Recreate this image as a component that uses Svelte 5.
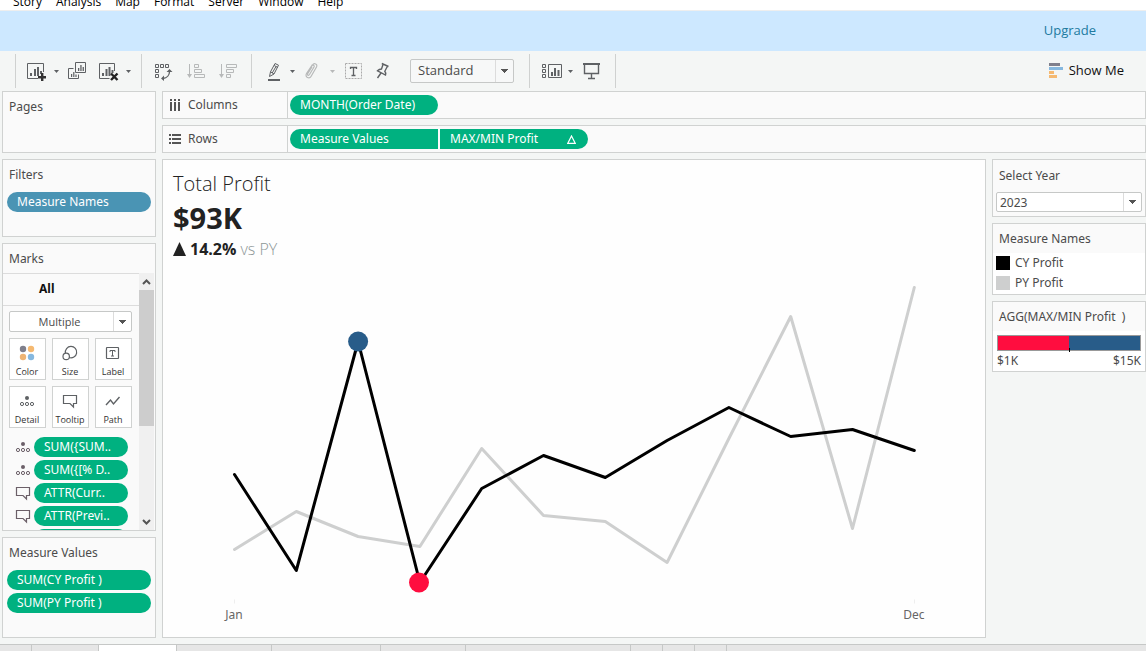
<script>
  const menus = ['Story', 'Analysis', 'Map', 'Format', 'Server', 'Window', 'Help'];
  const markCards = ['Color', 'Size', 'Label', 'Detail', 'Tooltip', 'Path'];
  const markPills = [
    { kind: 'Detail', text: 'SUM({SUM..' },
    { kind: 'Detail', text: 'SUM({[% D..' },
    { kind: 'Tooltip', text: 'ATTR(Curr..' },
    { kind: 'Tooltip', text: 'ATTR(Previ..' }
  ];
  const tabs = [32, 67, 78, 95, 109, 85, 165, 32, 32, 32];

  const cy = [205, 301, 72, 313, 219, 186, 208, 171, 138, 167, 160, 181];
  const py = [280, 242, 267, 277, 179, 246, 252, 293, 169, 47, 259, 18];
  const px = (i) => 71.5 + i * 61.8;
  const line = (ys) => ys.map((y, i) => `${px(i)},${y}`).join(' ');
</script>

{#snippet caret(label, dim = false)}
  <button class="caret" class:dim aria-label={label}>
    <svg width="5" height="3" viewBox="0 0 5 3"><path d="M0 0H5L2.5 3Z" fill="currentColor" /></svg>
  </button>
{/snippet}

{#snippet markIcon(kind)}
  <svg width="18" height="18" viewBox="0 0 18 18" fill="none" stroke="currentColor" stroke-width="1.2">
    {#if kind === 'Color'}
      <g stroke="none">
        <circle cx="5" cy="5" r="3.2" fill="#7f7f8c" /><circle cx="13" cy="5" r="3.2" fill="#f5b971" />
        <circle cx="5" cy="13" r="3.2" fill="#efb473" /><circle cx="13" cy="13" r="3.2" fill="#86b8df" />
      </g>
    {:else if kind === 'Size'}
      <path d="M4.4 9.2A5.7 5.7 0 1 1 8.1 13.5" /><circle cx="5.2" cy="12.4" r="3.2" />
    {:else if kind === 'Label'}
      <rect x="2.5" y="3.5" width="12" height="11" rx="0.5" />
      <path d="M6 8V6.5H11V8M8.5 6.5V12M7 12H10" stroke-width="1" />
    {:else if kind === 'Detail'}
      <circle cx="9" cy="6" r="2" fill="currentColor" stroke="none" />
      <circle cx="4" cy="12" r="1.6" stroke-width="1" /><circle cx="9" cy="12" r="1.6" stroke-width="1" /><circle cx="14" cy="12" r="1.6" stroke-width="1" />
    {:else if kind === 'Tooltip'}
      <path d="M2.5 3.5H15.5V11.5H12.5V15L9 11.5H2.5Z" />
    {:else}
      <path d="M2 13L6.5 8L9.5 12L15.5 5" stroke-width="1.4" />
    {/if}
  </svg>
{/snippet}

<div class="app">
  <nav class="menu">
    {#each menus as m}<button>{m}</button>{/each}
  </nav>

  <div class="banner"><a href="#upgrade">Upgrade</a></div>

  <div class="toolbar">
    <div class="group stub"></div>
    <div class="group g1">
      <div class="tool">
        <button class="icon" aria-label="New worksheet">
          <svg viewBox="0 0 20 20"><path d="M16.5 11V2.5H.5V17.5H11" class="s" /><path d="M3 12h2v3H3zM7 8h2v7H7zM10 6h2v9h-2zM13 10h2v3h-2z" /><path d="M14 12h2.4v3H19v2.4h-2.6V20H14v-2.6h-3V15h3z" fill="#333" /></svg>
        </button>
        {@render caret('New worksheet options')}
      </div>
      <button class="icon" aria-label="Duplicate">
        <svg viewBox="0 0 20 20"><path d="M5.5 1.5h10v10h-10zM3.5 7.5h-5v10h10v-4" class="s" /><path d="M8 7h1.3v3H8zM10.3 4h1.3v6h-1.3zM12.6 6h1.3v4h-1.3zM1 13h1.2v3H1zM3.2 11h1.2v5H3.2zM5.4 13.5h1.2V16H5.4z" /></svg>
      </button>
      <div class="tool">
        <button class="icon" aria-label="Clear sheet">
          <svg viewBox="0 0 20 20"><path d="M15.5 10V2.5H.5V17.5H10.5" class="s" /><path d="M3 12h2v3H3zM6.5 8h2v7h-2zM9.5 6h2v9h-2zM12.5 9h2v3h-2z" /><path d="M12 12.5l6.5 6.5M18.5 12.5L12 19" fill="none" stroke="#222" stroke-width="2.4" /></svg>
        </button>
        {@render caret('Clear sheet options')}
      </div>
    </div>
    <div class="group g2">
      <button class="icon" aria-label="Swap rows and columns">
        <svg viewBox="0 0 20 20"><path d="M2.5 3.5h3v3h-3zM7.5 3.5h3v3h-3zM12.5 3.5h3v3h-3zM2.5 8.5h3v3h-3zM2.5 13.5h3v3h-3z" class="s" /><path d="M16.5 10.500C16.500 14 14 17 10 17.500" class="s" stroke-width="1.3" /><path d="M13.500 11L16.500 8L19.500 11ZM11 14.500V20L8 17.500Z" /></svg>
      </button>
      <button class="icon dim" aria-label="Sort ascending">
        <svg viewBox="0 0 20 20"><path d="M4.5 3V15M9.5 3.5h4v3h-4zM9.5 8.5h7v3h-7zM9.5 13.5h10v3h-10z" class="s" /><path d="M2 13h5L4.5 17z" /></svg>
      </button>
      <button class="icon dim" aria-label="Sort descending">
        <svg viewBox="0 0 20 20"><path d="M4.5 3V15M9.5 3.5h10v3h-10zM9.5 8.5h7v3h-7zM9.5 13.5h4v3h-4z" class="s" /><path d="M2 13h5L4.5 17z" /></svg>
      </button>
    </div>
    <div class="group g3">
      <div class="tool">
        <button class="icon" aria-label="Highlight">
          <svg viewBox="0 0 20 20"><path d="M12 2.5L15.5 4.2L11 13L6.5 15.5L7.5 10.8ZM11.2 4.5L14.8 6.5M7.5 10.8L11 13M13 5.5L9.2 12" class="s" /><path d="M5 18h12v2H5z" /></svg>
        </button>
        {@render caret('Highlight options')}
      </div>
      <div class="tool">
        <button class="icon dim" aria-label="Group members">
          <svg viewBox="0 0 20 20"><path d="M5 11L9.5 4C11 1.5 15 3 13.5 6L8 15.5C6.5 18 1.5 16.5 3.5 12.5L8.5 5C9.5 3 12 4.5 11 6L6.5 13.5C5.5 15 3.8 14 4.8 12.5L9 6" class="s" stroke-width="1.2" /></svg>
        </button>
        {@render caret('Group options', true)}
      </div>
      <button class="icon" aria-label="Show mark labels">
        <svg viewBox="0 0 20 20"><rect x="2.5" y="2.5" width="16" height="15" class="s dash" /><path d="M7.5 8V6.5H13.5V8M10.5 6.5V14.5M8.5 14.5H12.5" class="s" stroke-width="1.3" /></svg>
      </button>
      <button class="icon" aria-label="Fix axes">
        <svg viewBox="0 0 20 20"><path d="M12.8 2.5L19.5 5.5M14 3.5L12.5 8C11 8 9.500 8.700 8.500 9.800L16.500 14C17 12.500 16.700 11.300 15.800 10.300L18.300 5.500M12 12L8.500 17" class="s" stroke-width="1.4" /></svg>
      </button>
      <select class="fit" aria-label="Fit"><option>Standard</option><option>Fit Width</option></select>
    </div>
    <div class="group g4">
      <div class="tool">
        <button class="icon" aria-label="Show or hide cards">
          <svg viewBox="0 0 20 20"><path d="M1.5 3.5h3v3h-3zM1.5 8.5h3v3h-3zM1.5 13.5h3v3h-3zM7.5 3.5h13v13h-13z" class="s" /><path d="M10 11h2v4h-2zM13 7h2v8h-2zM16.5 9h2v6h-2z" /></svg>
        </button>
        {@render caret('Card options')}
      </div>
      <button class="icon" aria-label="Presentation mode">
        <svg viewBox="0 0 20 20"><path d="M1 2h17v2H1z" /><path d="M2.5 4V12.5H16.5V4M9.5 12.5V17.5M6 17.5H13" class="s" stroke-width="1.4" /></svg>
      </button>
    </div>
    <button class="showme">
      <svg width="14" height="15" viewBox="0 0 14 15"><path fill="#7f7f8c" d="M0 0h11v3H0z" /><path fill="#86b8df" d="M0 4h14v3H0z" /><path fill="#f5b971" d="M0 8h5v3H0zM0 12h8v3H0z" /></svg>
      Show Me
    </button>
  </div>

  <main class="work">
    <aside class="left">
      <section class="card pages"><h2>Pages</h2></section>
      <section class="card filters">
        <h2>Filters</h2>
        <button class="pill blue">Measure Names</button>
      </section>
      <section class="card marks">
        <h2>Marks</h2>
        <div class="marks-body">
          <div class="marks-content">
            <div class="all">All</div>
            <div class="mark-tools">
              <select class="multiple" aria-label="Mark type"><option>Multiple</option><option>Line</option></select>
              <div class="mark-grid">
                {#each markCards as c}
                  <button>{@render markIcon(c)}<span>{c}</span></button>
                {/each}
              </div>
            </div>
            <ul>
              {#each markPills as p}
                <li>{@render markIcon(p.kind)}<button class="pill">{p.text}</button></li>
              {/each}
              <li class="next"><button class="pill" aria-label="More fields"></button></li>
            </ul>
          </div>
          <div class="scroll">
            <button aria-label="Scroll up"><svg width="9" height="6" viewBox="0 0 9 6"><path d="M1 5L4.5 1.5L8 5" /></svg></button>
            <div class="thumb"></div>
            <button class="down" aria-label="Scroll down"><svg width="9" height="6" viewBox="0 0 9 6"><path d="M1 1L4.5 4.5L8 1" /></svg></button>
          </div>
        </div>
      </section>
      <section class="card values">
        <h2>Measure Values</h2>
        <button class="pill">SUM(CY Profit )</button>
        <button class="pill">SUM(PY Profit )</button>
      </section>
    </aside>

    <div class="center">
      <section class="card shelf">
        <h2>
          <svg width="12" height="12" viewBox="0 0 12 12" fill="#555"><path d="M1 0h2v2H1zM5 0h2v2H5zM9 0h2v2H9zM1 3h2v9H1zM5 3h2v9H5zM9 3h2v9H9z" /></svg>
          Columns
        </h2>
        <div class="drop"><button class="pill field">MONTH(Order Date)</button></div>
      </section>
      <section class="card shelf">
        <h2>
          <svg width="12" height="12" viewBox="0 0 12 12" fill="#555"><path d="M0 1h2v2H0zM0 5h2v2H0zM0 9h2v2H0zM3 1h9v2H3zM3 5h9v2H3zM3 9h9v2H3z" /></svg>
          Rows
        </h2>
        <div class="drop">
          <button class="pill field first">Measure Values</button>
          <button class="pill field last">MAX/MIN Profit
            <svg width="9" height="9" viewBox="0 0 9 9"><path d="M4.5 1L8.2 8.3H.8Z" fill="none" stroke="#fff" stroke-width="1.2" /></svg>
          </button>
        </div>
      </section>

      <div class="lower">
        <section class="card sheet">
          <header>
            <h1>Total Profit</h1>
            <div class="total">$93K</div>
            <div class="delta">
              <svg width="13" height="14" viewBox="0 0 13 14"><path d="M6.5 0L13 14H0Z" fill="#222" /></svg>
              <b>14.2%</b><span>vs PY</span>
            </div>
          </header>
          <svg class="chart" viewBox="0 0 822 367" role="img" aria-label="Monthly profit, January to December">
            <polyline points={line(py)} stroke="#cecfcf" />
            <polyline points={line(cy)} stroke="#000" />
            <circle cx={px(2)} cy="72" r="10" fill="#285c89" />
            <circle cx="256" cy="313" r="10" fill="#ff0d3f" />
            <path d="M71.5 330v4M751.5 330v4" stroke="#eee" />
            <text x="71" y="349">Jan</text>
            <text x="751" y="349">Dec</text>
          </svg>
        </section>

        <aside class="right">
          <section class="card year">
            <h2><label for="year">Select Year</label></h2>
            <select id="year"><option>2023</option><option>2022</option></select>
          </section>
          <section class="card names">
            <h2>Measure Names</h2>
            <ul>
              <li><i class="black"></i>CY Profit</li>
              <li><i></i>PY Profit</li>
            </ul>
          </section>
          <section class="card agg">
            <h2>AGG(MAX/MIN Profit&nbsp; )</h2>
            <div class="ramp"></div>
            <div class="ends"><span>$1K</span><span>$15K</span></div>
          </section>
        </aside>
      </div>
    </div>
  </main>

  <footer class="tabs">
    {#each tabs as w, i}
      <button class:active={i === 2} style="width: {w}px" aria-label="Tab {i + 1}"></button>
    {/each}
  </footer>
</div>

<style>
  :global(body) { background: #f4f6f5; }
  .app, .app :global(*) { box-sizing: border-box; }
  .app {
    display: flex; flex-direction: column; height: 100vh; overflow: hidden;
    font: 12px/20px "Noto Sans", "Open Sans", sans-serif; color: #4b4b4b; background: #f4f6f5;
  }
  button, select { font: inherit; color: inherit; background: none; border: 0; padding: 0; margin: 0; }
  button { display: flex; align-items: center; justify-content: center; }
  h1, h2, ul { margin: 0; padding: 0; list-style: none; font-weight: 400; }
  h2 { font-size: 12px; line-height: 30px; padding-left: 6px; }
  svg { display: block; flex: none; }
  .menu, .banner, .toolbar, header, .mark-grid, .multiple { font-family: "Open Sans", "Noto Sans", sans-serif; }

  .menu { display: flex; align-items: flex-end; gap: 14px; height: 11px; flex: none; padding-left: 13px; background: #fff; border-bottom: 1px solid #eee; overflow: hidden; }
  .menu button { color: #000; line-height: 16px; height: 16px; }
  .banner { flex: none; height: 40px; display: flex; align-items: center; justify-content: flex-end; padding: 0 50px 2px 0; background: #cde8ff; font-size: 13px; }
  .banner a { color: #217aa0; text-decoration: none; }

  .toolbar { flex: none; height: 40px; display: flex; align-items: center; }
  .group { display: flex; align-items: center; height: 34px; border-right: 1px solid #cfd1d0; padding: 0 14px 0 11px; }
  .stub { padding: 0; width: 16px; }
  .g1 { gap: 9px; padding-right: 8px; }
  .g2 { gap: 12px; }
  .g3 { gap: 6px; padding-right: 15px; }
  .g4 { gap: 7px; padding-right: 13px; }
  .tool { display: flex; align-items: center; gap: 4px; }
  .icon { width: 20px; height: 20px; color: #5e6164; }
  .icon svg { width: 20px; height: 20px; overflow: visible; fill: currentColor; }
  .icon .s { fill: none; stroke: currentColor; }
  .icon .dash { stroke: #aaa; stroke-dasharray: 2 1; }
  .caret { width: 10px; height: 20px; color: #5e6164; }
  .icon.dim, .caret.dim { color: #b7b9b9; }
  select {
    appearance: none; border: 1px solid #c6c8c7; border-radius: 2px; background-color: #fff;
    background-image: linear-gradient(#dcdcdc, #dcdcdc), linear-gradient(to bottom right, #555 50%, transparent 50%), linear-gradient(to bottom left, #555 50%, transparent 50%);
    background-repeat: no-repeat;
    background-position: right 17px top 0, right 4px top 50%, right 8px top 50%;
    background-size: 1px 100%, 4px 4px, 4px 4px;
  }
  .fit { width: 104px; height: 24px; margin-left: 15px; padding: 0 0 2px 7px; font-size: 13px; background-color: #f7f8f8; }
  .showme { margin-left: auto; margin-right: 22px; gap: 6px; font-size: 13px; color: #111; padding-bottom: 2px; }

  .work { flex: 1; min-height: 0; display: flex; gap: 6px; padding: 0 0 6px 2px; }
  .card { background: #fafafa; border: 1px solid #d0d2d1; }
  .left, .right { width: 154px; flex: none; display: flex; flex-direction: column; gap: 6px; }
  .pages { height: 62px; }
  .filters { height: 78px; padding: 0 4px; }
  .filters h2, .values h2 { padding-left: 2px; }
  .filters .pill { margin-top: 2px; }
  .marks { flex: 1; min-height: 0; display: flex; flex-direction: column; }
  .marks h2 { line-height: 29px; }
  .values { height: 101px; padding: 0 4px; display: flex; flex-direction: column; }
  .values .pill { margin: 2px 0 1px; }

  .pill { width: 100%; height: 20px; border-radius: 10px; background: #00b180; color: #fff; padding: 0 10px; justify-content: flex-start; white-space: nowrap; flex: none; }
  .blue { background: #4a94b4; }

  .marks-body { flex: 1; min-height: 0; display: flex; }
  .marks-content { flex: 1; min-width: 0; border-top: 1px solid #dcdcdc; overflow: hidden; }
  .all { font-weight: 700; color: #111; height: 32px; line-height: 30px; padding-left: 36px; border-bottom: 1px solid #dcdcdc; }
  .mark-tools { padding: 5px 7px 0 6px; }
  .multiple { display: block; width: 100%; height: 21px; padding: 0 22px 0 0; text-align: center; text-align-last: center; font-size: 11px; }
  .mark-grid { display: grid; grid-template-columns: repeat(3, 1fr); gap: 6px; padding-top: 6px; }
  .mark-grid button { flex-direction: column; height: 42px; border: 1px solid #d0d2d1; background: #fff; font-size: 9px; line-height: 14px; color: #333; padding: 5px 1px 0 0; gap: 3px; }
  .mark-grid svg { color: #5e6164; }
  .marks ul { padding: 9px 11px 0; display: grid; gap: 3px; }
  .marks li { display: flex; align-items: center; gap: 2px; color: #6b5f68; }
  .marks li .pill { flex: 1; min-width: 0; }
  .marks .next { padding-left: 20px; }
  .scroll { width: 15px; flex: none; display: flex; flex-direction: column; background: #f0f0f0; margin-right: 1px; }
  .scroll button { height: 17px; flex: none; }
  .scroll path { fill: none; stroke: #555; stroke-width: 2; }
  .thumb { height: 136px; background: #cdcdcd; }
  .scroll .down { margin-top: auto; }

  .center { flex: 1; min-width: 0; display: flex; flex-direction: column; gap: 6px; }
  .shelf { flex: none; height: 28px; display: flex; }
  .shelf h2 { width: 125px; display: flex; align-items: center; gap: 7px; line-height: 26px; border-right: 1px solid #d0d2d1; }
  .drop { display: flex; align-items: center; gap: 2px; padding-left: 2px; }
  .field { width: 148px; }
  .first { border-radius: 10px 0 0 10px; }
  .last { border-radius: 0 10px 10px 0; justify-content: space-between; padding-right: 12px; }

  .lower { flex: 1; min-height: 0; display: flex; gap: 6px; }
  .sheet { flex: 1; min-width: 0; background: #fefefe; display: flex; flex-direction: column; }
  header { height: 109px; flex: none; padding: 10px 10px 0; color: #222; }
  h1 { font-size: 20px; line-height: 28px; font-weight: 300; }
  .total { font-size: 29px; line-height: 40px; font-weight: 700; }
  .delta { display: flex; align-items: center; gap: 4px; font-size: 16px; line-height: 22px; }
  .delta span { color: #8d9696; font-weight: 300; }
  .chart { flex: 1; width: 100%; min-height: 0; }
  .chart polyline { fill: none; stroke-width: 3; stroke-linejoin: round; stroke-linecap: round; }
  .chart text { font-size: 12px; fill: #666; text-anchor: middle; }

  .year { height: 58px; padding: 0 3px; }
  .year h2 { padding-left: 3px; line-height: 31px; }
  .year select { display: block; width: 100%; height: 20px; margin-top: 1px; padding-left: 3px; }
  .names { height: 72px; background: #fff; }
  .names h2, .agg h2 { background: #fafafa; line-height: 29px; }
  .names li { display: flex; align-items: center; gap: 5px; padding-left: 3px; height: 20px; line-height: 22px; }
  .names i { width: 14px; height: 14px; background: #cecfcf; }
  .names .black { background: #000; }
  .agg { height: 71px; background: #fff; }
  .agg h2 { white-space: nowrap; }
  .ramp { margin: 4px 4px 0; height: 16px; border: 1px solid #999; background: linear-gradient(90deg, #ff0d3f 50%, #285c89 50%); position: relative; }
  .ramp::after { content: ""; position: absolute; left: 50%; bottom: -2px; width: 1px; height: 4px; background: #000; }
  .ends { display: flex; justify-content: space-between; padding: 0 4px; }

  .tabs { flex: none; height: 7px; display: flex; background: #e6e6e6; border-top: 1px solid #c6c8c7; }
  .tabs button { border-right: 1px solid #c6c8c7; }
  .tabs .active { background: #fff; }
</style>
